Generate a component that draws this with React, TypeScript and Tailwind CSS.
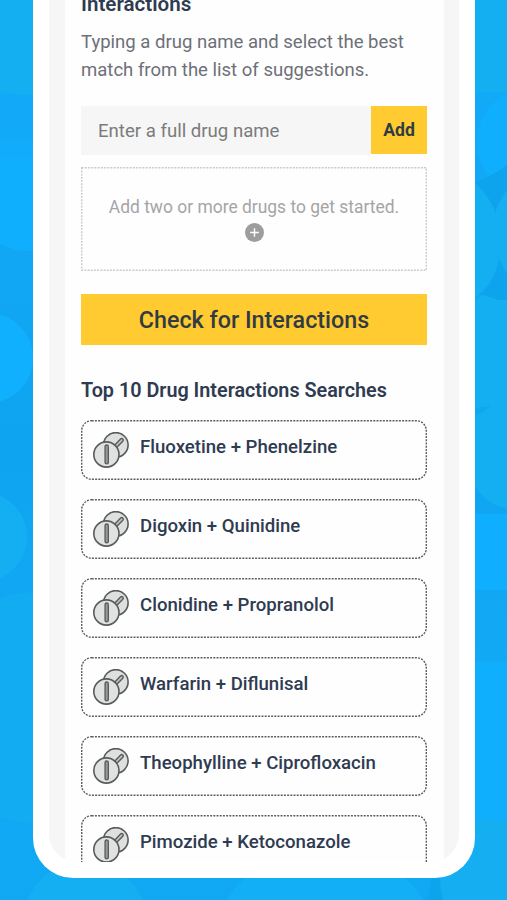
const SEARCHES = [
  'Fluoxetine + Phenelzine',
  'Digoxin + Quinidine',
  'Clonidine + Propranolol',
  'Warfarin + Diflunisal',
  'Theophylline + Ciprofloxacin',
  'Pimozide + Ketoconazole',
];

function PillIcon() {
  return (
    <svg className="h-9 w-9 shrink-0" viewBox="0 0 36 36" fill="none" aria-hidden="true">
      <circle cx="22.8" cy="12.9" r="12.3" fill="#dedfdf" stroke="#5a5c5c" strokeWidth="1.6" />
      <path d="M22.5 14.5L28.7 8.2" stroke="#5a5c5c" strokeWidth="4.5" strokeLinecap="round" />
      <path d="M22.5 14.5L28.7 8.2" stroke="#bfc1c1" strokeWidth="1.7" strokeLinecap="round" />
      <circle cx="13.4" cy="22.5" r="12.6" fill="#e0e1e1" stroke="#5a5c5c" strokeWidth="1.6" />
      <path d="M13.7 14.6V30.2" stroke="#5a5c5c" strokeWidth="4.6" strokeLinecap="round" />
      <path d="M13.7 14.6V30.2" stroke="#9a9c9c" strokeWidth="1.9" strokeLinecap="round" />
    </svg>
  );
}

// CSS dashes are too long for this border, so the outline is stroked by hand
function DottedOutline({ height, radius, color }: { height: number; radius: number; color: string }) {
  return (
    <svg className="pointer-events-none absolute inset-0 h-full w-full" fill="none" aria-hidden="true">
      <rect
        x="0.7"
        y="0.7"
        width="344.6"
        height={height - 1.4}
        rx={radius}
        stroke={color}
        strokeWidth="1.4"
        strokeDasharray="2 1.2"
      />
    </svg>
  );
}

function Backdrop() {
  return (
    <svg className="absolute inset-0 h-full w-full" viewBox="0 0 507 900" aria-hidden="true">
      <defs>
        <linearGradient id="sky" x1="0" y1="0" x2="0" y2="1">
          <stop offset="0" stopColor="#14aff1" />
          <stop offset="0.12" stopColor="#12a9f8" />
          <stop offset="0.5" stopColor="#0fa4ef" />
          <stop offset="0.75" stopColor="#12a9f5" />
          <stop offset="1" stopColor="#10a8f3" />
        </linearGradient>
        <linearGradient id="glow" x1="0" y1="0" x2="0" y2="1">
          <stop offset="0" stopColor="#10affe" stopOpacity="0" />
          <stop offset="0.4" stopColor="#10affe" />
        </linearGradient>
      </defs>
      <rect width="507" height="900" fill="url(#sky)" />
      <circle cx="25" cy="10" r="85" fill="#14aff1" />
      <circle cx="30" cy="185" r="66" fill="url(#glow)" />
      <circle cx="-12" cy="358" r="45" fill="#10b0ff" />
      <circle cx="-18" cy="537" r="45" fill="#14aff3" />
      <circle cx="38" cy="708" r="116" fill="#12acf3" />
      <rect x="475" y="0" width="32" height="92" fill="#14aff1" />
      <circle cx="531" cy="142" r="54" fill="#10affd" />
      <path d="M475 183Q495 174 507 165V190Q495 207 494 220Q490 201 475 183Z" fill="#0da3ed" />
      <path d="M475 183Q501 207 501 240Q501 278 475 298Z" fill="#14aff1" />
      <path d="M507 190V300H475Q500 285 498 258Q485 218 507 190Z" fill="#14aff1" />
      <path d="M480 294Q495 284 499 259L507 274V303Z" fill="#0da3ed" />
      <path d="M475 300H507V508Q487 505 475 486Z" fill="#14aff1" />
      <path d="M475 408L491 406Q484 412 475 416Z" fill="#0fa7f0" />
      <rect x="475" y="514" width="32" height="76" fill="#10aeff" />
      <rect x="475" y="662" width="32" height="158" fill="#10affe" />
      <rect x="432" y="820" width="75" height="80" fill="#14aef1" />
      <circle cx="85" cy="923" r="62" fill="#14aef2" />
      <circle cx="325" cy="960" r="115" fill="#12aef6" />
      <path d="M431 878H440Q440 888 443 900H427Q431 890 431 878Z" fill="#0da4ee" />
    </svg>
  );
}

export default function App() {
  return (
    <div className="relative h-[900px] w-full overflow-hidden font-['Roboto',sans-serif] text-[#2f3b50]">
      <Backdrop />
      <div className="relative ml-[33px] h-[878px] w-[442px] overflow-hidden rounded-b-[40px] bg-white px-4 pb-4">
        <div className="h-full overflow-hidden rounded-b-[28px] bg-[#f6f6f6] pr-[15px] pl-4">
          <main className="h-full overflow-hidden bg-[#fefefe] pr-[17px] pl-4">
            <h1 className="-mt-[9px] text-[20.6px] leading-[26px] font-semibold">Interactions</h1>
            <p className="mt-[11px] text-[18.55px] leading-[28px] whitespace-nowrap text-[#6d7078]">
              Typing a drug name and select the best
              <br />
              match from the list of suggestions.
            </p>

            <div className="mt-[22px] flex h-12">
              <input
                className="h-[49px] min-w-0 flex-1 bg-[#f6f6f6] pl-[17px] text-[18.6px] outline-none placeholder:text-[#7b7b7b]"
                placeholder="Enter a full drug name"
              />
              <button className="w-14 bg-[#ffcb30] text-[17.6px] font-bold text-[#313b44]">Add</button>
            </div>

            <div className="relative mt-[13px] flex h-[104px] flex-col items-center pt-[27px]">
              <DottedOutline height={104} radius={0} color="#cbcbcb" />
              <p className="text-[17.45px] leading-[26px] whitespace-nowrap text-[#a5a5a5]">
                Add two or more drugs to get started.
              </p>
              <svg className="mt-[3px] h-[19px] w-[19px]" viewBox="0 0 19 19" aria-hidden="true">
                <circle cx="9.5" cy="9.5" r="9.5" fill="#9d9d9d" />
                <path d="M9.5 5.2V13.8M5.2 9.5H13.8" stroke="#fff" strokeWidth="1.4" />
              </svg>
            </div>

            <button className="mt-[23px] h-[51px] w-full bg-[#ffcb30] pt-0.5 text-[23.3px] font-medium text-[#313b44]">
              Check for Interactions
            </button>

            <h2 className="mt-[33px] text-[19.8px] leading-[26px] font-semibold">Top 10 Drug Interactions Searches</h2>
            <ul className="mt-4 flex flex-col gap-[19px]">
              {SEARCHES.map((name) => (
                <li key={name} className="relative flex h-[60px] shrink-0 items-center gap-[11px] pl-3">
                  <DottedOutline height={60} radius={10} color="#5a5e65" />
                  <PillIcon />
                  <span className="-mt-[5px] text-[18.6px] font-medium whitespace-nowrap">{name}</span>
                </li>
              ))}
            </ul>
          </main>
        </div>
      </div>
    </div>
  );
}
